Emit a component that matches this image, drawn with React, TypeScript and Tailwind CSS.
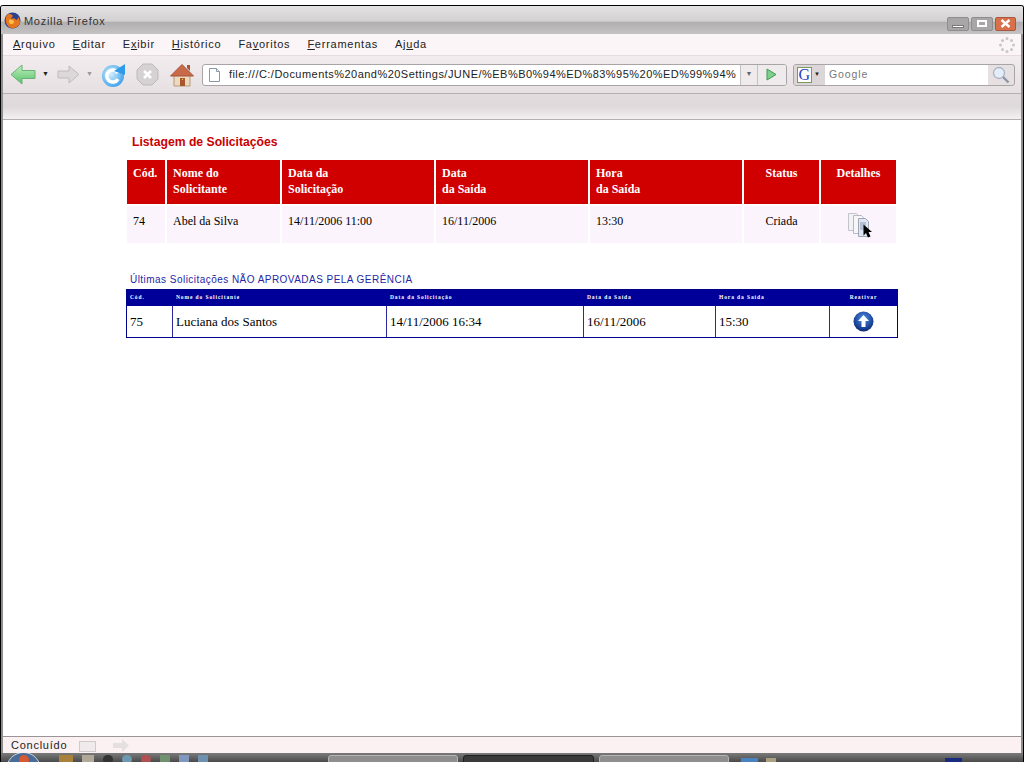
const serif = "font-['Liberation_Serif',serif]";

function Firefox() {
  return (
    <svg width="17" height="17" viewBox="0 0 17 17">
      <circle cx="8.5" cy="8.5" r="8" fill="#2b3f8f" />
      <path d="M3 3C1 6 1 12 5 15c4 2.500 9 1 11-4 0-3-1-5-2-6 0 2-1 3-2 3-1-2-3-2-5-1 0-1 1-2 2-3C7 1 4 2 3 3z" fill="#e8761c" />
      <path d="M5 8c2-1 5 0 5 2s-3 3-5 1z" fill="#f6c04a" />
    </svg>
  );
}

function BackArrow() {
  return (
    <svg width="26" height="21" viewBox="0 0 26 21">
      <defs>
        <linearGradient id="bg" x1="0" y1="0" x2="0" y2="1">
          <stop offset="0" stopColor="#c5f0bd" />
          <stop offset="1" stopColor="#55c06a" />
        </linearGradient>
      </defs>
      <path d="M1 10.500 12 1v5.500h13v8H12V20z" fill="url(#bg)" stroke="#6ab07a" strokeWidth="1" />
    </svg>
  );
}

function ForwardArrow() {
  return (
    <svg width="23" height="19" viewBox="0 0 23 19">
      <path d="M22 9.500 12 1v5H1v7h11v5z" fill="#dcd8da" stroke="#bfbbbd" strokeWidth="1" />
    </svg>
  );
}

function Reload() {
  return (
    <svg width="25" height="24" viewBox="0 0 25 24">
      <defs>
        <radialGradient id="rg" cx="0.4" cy="0.4" r="0.7">
          <stop offset="0" stopColor="#d8f0ff" />
          <stop offset="1" stopColor="#2f9be8" />
        </radialGradient>
      </defs>
      <circle cx="12" cy="13" r="11" fill="url(#rg)" />
      <path d="M17 10a6 6 0 1 0 0 6" fill="none" stroke="#fff" strokeWidth="3.500" />
      <path d="M13 8 24 1v11z" fill="#2f9be8" />
    </svg>
  );
}

function Stop() {
  return (
    <svg width="23" height="23" viewBox="0 0 23 23">
      <path d="M7 1h9l6 6v9l-6 6H7l-6-6V7z" fill="#d6d2d4" stroke="#bdb9bb" />
      <path d="M8 8l7 7M15 8l-7 7" stroke="#fff" strokeWidth="2.600" />
    </svg>
  );
}

function Home() {
  return (
    <svg width="24" height="24" viewBox="0 0 24 24">
      <path d="M4 12h16v11H4z" fill="#ecd9c0" stroke="#b59878" />
      <path d="M0.500 13 12 1.500 23.500 13z" fill="#c8694a" stroke="#a5553a" />
      <path d="M17 2h3v6l-3-3z" fill="#a5553a" />
      <path d="M10 15h5v8h-5z" fill="#a8562d" />
      <path d="M12 16h1v1h-1z" fill="#f2c94c" />
    </svg>
  );
}

function Page({ w = 11, h = 14 }: { w?: number; h?: number }) {
  return (
    <svg width={w} height={h} viewBox="0 0 11 14">
      <path d="M.5.500h7l3 3v10H.500z" fill="#fff" stroke="#8b98a8" />
      <path d="M7.500.500v3h3" fill="#e6ebf0" stroke="#8b98a8" />
    </svg>
  );
}

function Throbber() {
  const dots = [
    [8, 1.500],
    [12.500, 3.500],
    [14.500, 8],
    [12.500, 12.500],
    [8, 14.500],
    [3.500, 12.500],
    [1.500, 8],
    [3.500, 3.500],
  ];
  return (
    <svg width="16" height="16" viewBox="0 0 16 16">
      {dots.map(([x, y], i) => (
        <circle key={i} cx={x} cy={y} r="1.500" fill="#c9c6c7" />
      ))}
    </svg>
  );
}

function Magnifier() {
  return (
    <svg width="18" height="18" viewBox="0 0 18 18">
      <circle cx="7" cy="7" r="5.500" fill="#e4eefa" stroke="#a9b4c2" strokeWidth="1.300" />
      <path d="M11 11l5.500 5.500" stroke="#8d97a5" strokeWidth="2.400" />
    </svg>
  );
}

function Docs() {
  return (
    <svg width="25" height="26" viewBox="0 0 25 26">
      <path d="M.5 1.500h8l2 2v15H.500z" fill="#f2f2f4" stroke="#c4c4cc" />
      <path d="M5.500 3.500h8l2 2v16h-10z" fill="#f6f6f8" stroke="#b8b8c2" />
      <path d="M10.500 6.500h7l3 3v15h-10z" fill="#dfe6f2" stroke="#9ea6b8" />
      <path d="M12 11h6M12 13h6M12 15h4M12 17h4" stroke="#8d9ab5" />
      <path d="M15.500 12.500v11l2.500-2.500 2 4.500 2.500-1-2-4.500h3.500z" fill="#000" />
    </svg>
  );
}

function UpCircle() {
  return (
    <svg width="21" height="21" viewBox="0 0 21 21">
      <defs>
        <radialGradient id="uc" cx="0.5" cy="0.35" r="0.7">
          <stop offset="0" stopColor="#4d8fe8" />
          <stop offset="1" stopColor="#05206f" />
        </radialGradient>
      </defs>
      <circle cx="10.500" cy="10.500" r="10" fill="url(#uc)" />
      <path d="M10.500 4 16 10h-3.500v6h-4v-6H5z" fill="#fff" />
    </svg>
  );
}

function U({ children }: { children: string }) {
  return <span className="underline underline-offset-[1px]">{children}</span>;
}

const menu: [string, string, string][] = [
  ["", "A", "rquivo"],
  ["", "E", "ditar"],
  ["E", "x", "ibir"],
  ["", "H", "istórico"],
  ["Fa", "v", "oritos"],
  ["", "F", "erramentas"],
  ["Aj", "u", "da"],
];

const head1 = [
  { a: "Cód.", center: false },
  { a: "Nome do", b: "Solicitante" },
  { a: "Data da", b: "Solicitação" },
  { a: "Data", b: "da Saída" },
  { a: "Hora", b: "da Saída" },
  { a: "Status", center: true },
  { a: "Detalhes", center: true },
];

const row1 = ["74", "Abel da Silva", "14/11/2006 11:00", "16/11/2006", "13:30"];

const head2 = ["Cód.", "Nome do Solicitante", "Data da Solicitação", "Data da Saída", "Hora da Saída"];
const row2 = ["75", "Luciana dos Santos", "14/11/2006 16:34", "16/11/2006", "15:30"];

export default function App() {
  return (
    <div className="w-[1024px] h-[768px] bg-white overflow-hidden flex flex-col font-['Liberation_Sans',sans-serif]">
      <div className="h-[5px] shrink-0 bg-white" />
      <div className="h-[757px] shrink-0 flex flex-col border-t border-x border-black rounded-t-[3px] overflow-hidden bg-[#f4eef0]">
        {/* title bar */}
        <div className="h-[28px] shrink-0 relative flex items-center bg-[linear-gradient(to_bottom,#e4e2e2_0%,#d2d0d0_55%,#b0aeae_56%,#c4c2c2_100%)] pl-[3px] pr-[7px]">
          <Firefox />
          <span className="ml-[3px] text-[11px] tracking-[0.7px] text-[#333] mt-[2px]">Mozilla Firefox</span>
          <div className="ml-auto flex gap-[2px] mt-[7px]">
            <div className="w-[22px] h-[14px] rounded-[2px] bg-[#a8a6a6] border border-[#8f8d8d] flex items-end justify-center pb-[2px]">
              <div className="w-[12px] h-[3px] bg-white border-[0.5px] border-[#777]" />
            </div>
            <div className="w-[22px] h-[14px] rounded-[2px] bg-[#a8a6a6] border border-[#8f8d8d] flex items-center justify-center">
              <div className="w-[10px] h-[7px] border-2 border-white" />
            </div>
            <div className="w-[21px] h-[14px] rounded-[2px] bg-[#d8704a] border border-[#a85a40] flex items-center justify-center">
              <svg width="11" height="9" viewBox="0 0 11 9">
                <path d="M1.500 1l8 7M9.500 1l-8 7" stroke="#fff" strokeWidth="2.400" />
              </svg>
            </div>
          </div>
        </div>
        {/* inner frame */}
        <div className="flex-1 flex flex-col border-l-2 border-r-2 border-[#8f8d8d] min-h-0">
          {/* menu */}
          <div className="h-[21px] shrink-0 flex items-center bg-[#fbf5f7] pl-[10px] pr-[6px] text-[11px] tracking-[0.75px] text-[#222]">
            <div className="flex gap-[17px] -mt-[1px]">
              {menu.map(([p, u, s]) => (
                <span key={p + u + s}>
                  {p}
                  <U>{u}</U>
                  {s}
                </span>
              ))}
            </div>
            <div className="ml-auto">
              <Throbber />
            </div>
          </div>
          {/* toolbar */}
          <div className="h-[38px] shrink-0 flex items-center border-t border-[#e6dcdf] bg-[linear-gradient(to_bottom,#f2ecee,#e6e0e2)] pl-[7px] text-[#222]">
            <BackArrow />
            <span className="ml-[6px] text-[7px] text-[#222]">▼</span>
            <div className="ml-[8px]">
              <ForwardArrow />
            </div>
            <span className="ml-[6px] text-[7px] text-[#999]">▼</span>
            <div className="ml-[8px]">
              <Reload />
            </div>
            <div className="ml-[10px]">
              <Stop />
            </div>
            <div className="ml-[11px]">
              <Home />
            </div>
            {/* url bar */}
            <div className="ml-[8px] w-[585px] h-[22px] flex items-center rounded-[3px] border border-[#a9a5a6] bg-white overflow-hidden">
              <div className="ml-[6px] shrink-0">
                <Page />
              </div>
              <span className="ml-[9px] w-[509px] shrink-0 text-[11px] tracking-[0.47px] whitespace-nowrap overflow-hidden text-[#222]">
                file:///C:/Documents%20and%20Settings/JUNE/%EB%B0%94%ED%83%95%20%ED%99%94%
              </span>
              <div className="ml-[2px] w-[18px] h-full shrink-0 flex items-center justify-center border-x border-[#c4c0c1] bg-[#efeaeb] text-[7px] text-[#666]">
                ▼
              </div>
              <div className="flex-1 h-full flex items-center justify-center bg-[#efeaeb]">
                <svg width="11" height="13" viewBox="0 0 11 13">
                  <path d="M1 1l9 5.500-9 5.500z" fill="#7fd08a" stroke="#3f9a58" />
                </svg>
              </div>
            </div>
            {/* search */}
            <div className="ml-[6px] w-[222px] h-[22px] flex items-center rounded-[3px] border border-[#a9a5a6] bg-[#e6e0e2] overflow-hidden">
              <div className="w-[31px] h-full shrink-0 flex items-center pl-[3px] gap-[2px] bg-[#dcd6d8]">
                <span className={`${serif} w-[15px] h-[16px] flex items-center justify-center bg-white border border-[#7a9a5a] text-[16px] leading-none text-[#2a3fc0]`}>
                  G
                </span>
                <span className="text-[6px] text-[#222]">▼</span>
              </div>
              <div className="w-[163px] h-full shrink-0 flex items-center bg-white pl-[4px] text-[10.500px] tracking-[0.9px] text-[#777]">
                Google
              </div>
              <div className="flex-1 h-full flex items-center justify-center">
                <Magnifier />
              </div>
            </div>
          </div>
          {/* bookmarks */}
          <div className="h-[27px] shrink-0 border-y border-[#b4b0b1] bg-[linear-gradient(to_bottom,#e2dcde,#dfd9db_50%,#f4eff0)]" />
          {/* content */}
          <div className="flex-1 min-h-0 bg-white pl-[124px]">
            <h1 className="mt-[15px] ml-[5px] text-[12.200px] leading-[15px] font-bold text-[#c80000]">
              Listagem de Solicitações
            </h1>
            {/* table 1 */}
            <div className={`${serif} mt-[10px] w-[769px] grid grid-cols-[38px_113px_152px_152px_152px_75px_75px] gap-x-[2px] gap-y-[2px] text-[12px]`}>
              {head1.map((h) => (
                <div
                  key={h.a}
                  className={`h-[44px] bg-[#d10000] pt-[5px] leading-[16px] font-bold text-white ${h.center ? "text-center" : "pl-[6px]"}`}
                >
                  {h.a}
                  {h.b && <br />}
                  {h.b}
                </div>
              ))}
              {row1.map((c) => (
                <div key={c} className="h-[37px] bg-[#fbf4fd] pl-[6px] pt-[7px] leading-[16px] text-black">
                  {c}
                </div>
              ))}
              <div className="h-[37px] bg-[#fbf4fd] pt-[7px] leading-[16px] text-center text-black">Criada</div>
              <div className="h-[37px] bg-[#fbf4fd] pt-[6px] pl-[3px] flex justify-center">
                <Docs />
              </div>
            </div>
            {/* heading 2 */}
            <h2 className="mt-[30px] ml-[3px] text-[10px] leading-[13px] tracking-[0.46px] text-[#2525a5]">
              Últimas Solicitações NÃO APROVADAS PELA GERÊNCIA
            </h2>
            {/* table 2 */}
            <div className={`${serif} mt-[3px] -ml-[1px] w-[772px] h-[49px] border border-[#00008b] grid grid-cols-[46px_214px_197px_132px_114px_1fr] grid-rows-[16px_1fr]`}>
              {head2.map((h) => (
                <div key={h} className="bg-[#000099] pl-[3px] text-[5.500px] leading-[15px] font-bold tracking-[0.9px] text-white whitespace-nowrap">
                  {h}
                </div>
              ))}
              <div className="bg-[#000099] text-center text-[5.500px] leading-[15px] font-bold tracking-[0.9px] text-white">
                Reativar
              </div>
              {row2.map((c) => (
                <div key={c} className="border-r border-[#2a2a9c] pl-[3px] flex items-center text-[13px] text-black">
                  {c}
                </div>
              ))}
              <div className="flex items-center justify-center">
                <UpCircle />
              </div>
            </div>
          </div>
          {/* status */}
          <div className="h-[17px] shrink-0 flex items-center border-t border-[#9a9697] bg-[#fbf1f3] pl-[8px] text-[11px] tracking-[0.75px] text-[#222]">
            <span>Concluído</span>
            <div className="ml-[12px] mt-[3px] w-[17px] h-[11px] border border-[#cfcbcc] bg-[#f0eaec]" />
            <div className="ml-[16px] mt-[1px]">
              <svg width="18" height="15" viewBox="0 0 18 15">
                <path d="M17 7.500 10 1v4H1v5h9v4z" fill="#e4e0e1" />
              </svg>
            </div>
          </div>
        </div>
        {/* taskbar */}
        <div className="h-[9px] shrink-0 relative flex items-start bg-[linear-gradient(to_bottom,#7a7a7a,#4a4a4a)] overflow-hidden">
          <div className="ml-[5px] mt-[-1px] w-[35px] h-[36px] shrink-0 rounded-full border border-[#c4d4e4] bg-[#4a6a98] flex justify-center pt-[2px]">
            <div className="w-[10px] h-[10px] rounded-full bg-[#d85a30]" />
          </div>
          <div className="ml-[18px] mt-[2px] flex gap-[9px]">
            <div className="w-[14px] h-[9px] bg-[#a8813a]" />
            <div className="w-[12px] h-[9px] bg-[#b0a898]" />
            <div className="w-[10px] h-[9px] bg-[#333] rounded-full" />
            <div className="w-[10px] h-[9px] bg-[#6c98b0] rounded-full" />
            <div className="w-[10px] h-[9px] bg-[#b05050] rounded-full" />
            <div className="w-[10px] h-[9px] bg-[#709070]" />
            <div className="w-[10px] h-[9px] bg-[#8098c0]" />
            <div className="w-[10px] h-[9px] bg-[#7090b0]" />
          </div>
          <div className="absolute left-[327px] top-[2px] w-[130px] h-[8px] rounded-t-[3px] bg-[#8f8d8d] border border-[#b4b4b4]" />
          <div className="absolute left-[462px] top-[2px] w-[131px] h-[8px] rounded-t-[3px] bg-[#3a3a3a] border border-[#1f1f1f]" />
          <div className="absolute left-[598px] top-[2px] w-[130px] h-[8px] rounded-t-[3px] bg-[#8f8d8d] border border-[#b4b4b4]" />
          <div className="absolute left-[740px] top-[5px] w-[17px] h-[5px] bg-[#4a82c0]" />
          <div className="absolute left-[765px] top-[5px] w-[10px] h-[5px] bg-[#a8a080]" />
          <div className="absolute left-[944px] top-[5px] w-[17px] h-[5px] bg-[#1a2a80]" />
        </div>
      </div>
    </div>
  );
}
